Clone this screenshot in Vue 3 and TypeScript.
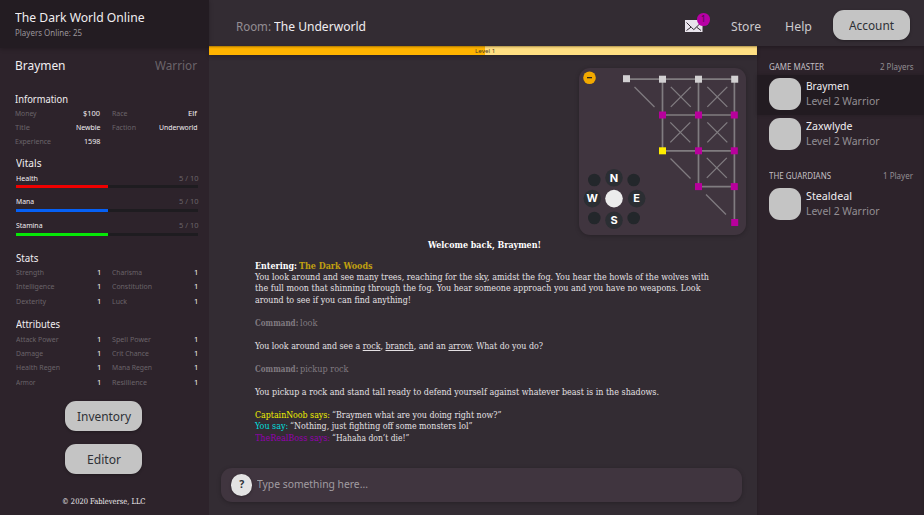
<script setup lang="ts">
import type { Directive } from 'vue'

interface Stat { label: string; lw: number; value: string; vw: number }
interface Vital { name: string; w: number; value: number; max: number; kind: string }
interface Player { name: string; w: number; active?: boolean }
interface Group { title: string; tw: number; count: string; cw: number; players: Player[] }

// Sets a run of text to a fixed measure, condensing or widening its glyphs.
const vFit: Directive<HTMLElement, number> = {
  mounted(el, binding) {
    const natural = el.offsetWidth ? el.getBoundingClientRect().width : 0
    if (!natural) return
    el.style.width = `${binding.value}px`
    el.style.transform = `scaleX(${binding.value / natural})`
  },
}

const one = (label: string, lw: number): Stat => ({ label, lw, value: '1', vw: 4.4 })

const information: Stat[] = [
  { label: 'Money', lw: 21.5, value: '$100', vw: 17 },
  { label: 'Race', lw: 15.5, value: 'Elf', vw: 9 },
  { label: 'Title', lw: 15, value: 'Newbie', vw: 24.5 },
  { label: 'Faction', lw: 24, value: 'Underworld', vw: 38.5 },
  { label: 'Experience', lw: 36, value: '1598', vw: 16.5 },
]
const vitals: Vital[] = [
  { name: 'Health', w: 22, value: 5, max: 10, kind: 'health' },
  { name: 'Mana', w: 18, value: 5, max: 10, kind: 'mana' },
  { name: 'Stamina', w: 26.5, value: 5, max: 10, kind: 'stamina' },
]
const stats = [
  one('Strength', 28), one('Charisma', 30), one('Intelligence', 38.5),
  one('Constitution', 40), one('Dexterity', 30), one('Luck', 15),
]
const attributes = [
  one('Attack Power', 42.5), one('Spell Power', 39), one('Damage', 27), one('Crit Chance', 37),
  one('Health Regen', 44), one('Mana Regen', 40), one('Armor', 19.5), one('Resillience', 35),
]
const groups: Group[] = [
  { title: 'GAME MASTER', tw: 55, count: '2 Players', cw: 33.5,
    players: [{ name: 'Braymen', w: 43, active: true }, { name: 'Zaxwlyde', w: 46.5 }] },
  { title: 'THE GUARDIANS', tw: 62, count: '1 Player', cw: 30,
    players: [{ name: 'Stealdeal', w: 46 }] },
]

const crosses = [[101.5, 27.5], [138, 27.5], [101, 63], [138, 63], [137.5, 98.5]]
const slashes = [[65, 27], [101, 98.5], [136.5, 134.5]]
const rooms: [number, number, string][] = [
  [47.5, 10.7, 'visited'], [83.5, 11.2, 'visited'], [119.5, 11.2, 'visited'], [155.7, 11.2, 'visited'],
  [83.5, 47, 'unseen'], [119.5, 47, 'unseen'], [155.3, 47, 'unseen'],
  [83.5, 82.8, 'here'], [119.5, 82.8, 'unseen'], [155.3, 82.8, 'unseen'],
  [119.5, 118.6, 'unseen'], [155.3, 118.6, 'unseen'], [155.7, 154.5, 'unseen'],
]
const directions: [number, number, string][] = [
  [35, 109.8, 'N'], [13.3, 130.6, 'W'], [57.7, 130.6, 'E'], [35, 152.2, 'S'],
]
const diagonals = [[15.3, 112], [54.7, 112], [15.3, 150], [54.7, 150]]
</script>

<template>
  <div class="game">
    <aside class="sidebar">
      <header class="brand">
        <div class="brand-title"><span v-fit="129.5" class="t">The Dark World Online</span></div>
        <div class="brand-sub"><span v-fit="67" class="t">Players Online: 25</span></div>
      </header>

      <div class="character">
        <span v-fit="50.5" class="t">Braymen</span>
        <span v-fit="42" class="t muted">Warrior</span>
      </div>

      <section class="info">
        <h2><span v-fit="53" class="t">Information</span></h2>
        <div class="grid">
          <div v-for="s in information" :key="s.label" class="pair">
            <span v-fit="s.lw" class="t muted">{{ s.label }}</span>
            <span v-fit="s.vw" class="t">{{ s.value }}</span>
          </div>
        </div>
      </section>

      <section class="vitals">
        <h2><span v-fit="25.5" class="t">Vitals</span></h2>
        <div v-for="v in vitals" :key="v.name" class="vital">
          <div class="vital-row">
            <span v-fit="v.w" class="t">{{ v.name }}</span>
            <span v-fit="19.5" class="t muted">{{ v.value }} / {{ v.max }}</span>
          </div>
          <div class="track"><div class="fill" :class="v.kind" :style="{ width: (v.value / v.max) * 101 + '%' }"></div></div>
        </div>
      </section>

      <section class="stats">
        <h2><span v-fit="22.5" class="t">Stats</span></h2>
        <div class="grid">
          <div v-for="s in stats" :key="s.label" class="pair">
            <span v-fit="s.lw" class="t muted">{{ s.label }}</span>
            <span v-fit="s.vw" class="t">{{ s.value }}</span>
          </div>
        </div>
      </section>

      <section class="attributes">
        <h2><span v-fit="44" class="t">Attributes</span></h2>
        <div class="grid">
          <div v-for="s in attributes" :key="s.label" class="pair">
            <span v-fit="s.lw" class="t muted">{{ s.label }}</span>
            <span v-fit="s.vw" class="t">{{ s.value }}</span>
          </div>
        </div>
      </section>

      <div class="actions">
        <button class="btn"><span v-fit="54" class="t">Inventory</span></button>
        <button class="btn"><span v-fit="34" class="t">Editor</span></button>
      </div>
      <footer class="legal"><span v-fit="83.5" class="t">© 2020 Fableverse, LLC</span></footer>
    </aside>

    <div class="right">
      <header class="topbar">
        <div class="room">
          <span v-fit="35" class="t room-label">Room:</span>
          <span v-fit="92" class="t">The Underworld</span>
        </div>
        <nav class="nav">
          <div class="mail">
            <svg width="18" height="12" viewBox="0 0 18 12">
              <rect width="17.5" height="12" fill="#e9e4ec" />
              <path d="M1.5 2.5 L6.6 7.6 L8.8 9.6 L11 7.6 L16 2.5 M1.5 10.5 L6.2 7 M16 10.5 L11.4 7" fill="none" stroke="#332c33" stroke-width="1" />
            </svg>
            <span class="badge">1</span>
          </div>
          <a class="store"><span v-fit="30" class="t">Store</span></a>
          <a class="help"><span v-fit="27" class="t">Help</span></a>
          <button class="btn"><span v-fit="45" class="t">Account</span></button>
        </nav>
      </header>

      <div class="body">
        <main class="main">
          <div class="level"><div class="level-fill"></div><span class="level-text"><span v-fit="20.5" class="t">Level 1</span></span></div>

          <div class="map">
            <svg width="167" height="167" viewBox="0 0 167 167">
              <g class="line">
                <path d="M47.5 11.2H155.7M83.5 47H155.3M83.5 82.8H155.3M119.5 118.6H155.3M83.5 11V83M119.5 11V118.6M155.4 11V154.5" />
              </g>
              <g class="thin">
                <path v-for="(c, i) in crosses" :key="i" :d="`M${c[0] - 10} ${c[1] - 8}m0 0l20 20m0-20l-20 20`" transform="translate(0.3 -0.6)" />
                <path v-for="(s, i) in slashes" :key="'s' + i" :d="`M${s[0] - 9.5} ${s[1] - 8}l20 20`" />
              </g>
              <rect v-for="(r, i) in rooms" :key="'r' + i" :x="r[0] - 3.5" :y="r[1] - 3.5" width="7" height="7" :class="r[2]" />
              <circle cx="10.5" cy="9.7" r="6.3" fill="#f2a900" />
              <rect x="8" y="9" width="5" height="1.3" fill="#2b2420" />
              <circle v-for="(d, i) in diagonals" :key="'d' + i" :cx="d[0]" :cy="d[1]" r="6.3" fill="#23272b" />
              <g v-for="d in directions" :key="d[2]">
                <circle :cx="d[0]" :cy="d[1]" r="8.8" fill="#2b2e33" />
                <text :x="d[0]" :y="d[1] + 3.7" text-anchor="middle" class="dir">{{ d[2] }}</text>
              </g>
              <circle cx="35" cy="130.6" r="8.8" fill="#ececec" />
            </svg>
          </div>

          <div class="log">
            <p class="welcome"><span v-fit="113" class="t">Welcome back, Braymen!</span></p>
            <p class="bright"><span v-fit="42" class="t strong">Entering:</span><span v-fit="73.5" class="t strong gold">The Dark Woods</span></p>
            <p><span v-fit="454" class="t">You look around and see many trees, reaching for the sky, amidst the fog. You hear the howls of the wolves with</span></p>
            <p><span v-fit="445.5" class="t">the full moon that shinning through the fog. You hear someone approach you and you have no weapons. Look</span></p>
            <p class="gap"><span v-fit="156" class="t">around to see if you can find anything!</span></p>
            <p class="cmd gap"><span v-fit="43.3" class="t strong">Command:</span><span v-fit="17.5" class="t">look</span></p>
            <p class="gap"><span v-fit="288" class="t">You look around and see a <u>rock</u>, <u>branch</u>, and an <u>arrow</u>. What do you do?</span></p>
            <p class="cmd gap"><span v-fit="43.3" class="t strong">Command:</span><span v-fit="48.5" class="t">pickup rock</span></p>
            <p class="gap"><span v-fit="404" class="t">You pickup a rock and stand tall ready to defend yourself against whatever beast is in the shadows.</span></p>
            <p><span v-fit="75" class="t yellow">CaptainNoob says:</span><span v-fit="169.5" class="t">“Braymen what are you doing right now?”</span></p>
            <p><span v-fit="33.3" class="t cyan">You say:</span><span v-fit="182.5" class="t">“Nothing, just fighting off some monsters lol”</span></p>
            <p><span v-fit="75" class="t purple">TheRealBoss says:</span><span v-fit="77.5" class="t">“Hahaha don’t die!”</span></p>
          </div>

          <div class="prompt">
            <span class="q">?</span>
            <span v-fit="111" class="t">Type something here...</span>
          </div>
        </main>

        <aside class="players">
          <section v-for="g in groups" :key="g.title" class="group">
            <div class="group-head">
              <span v-fit="g.tw" class="t">{{ g.title }}</span>
              <span v-fit="g.cw" class="t count">{{ g.count }}</span>
            </div>
            <div v-for="p in g.players" :key="p.name" class="player" :class="{ active: p.active }">
              <div class="avatar"></div>
              <div class="who">
                <div><span v-fit="p.w" class="t">{{ p.name }}</span></div>
                <div class="rank"><span v-fit="73.5" class="t">Level 2 Warrior</span></div>
              </div>
            </div>
          </section>
        </aside>
      </div>
    </div>
  </div>
</template>

<style>
body { background: #332c33; overflow: hidden; }
</style>

<style scoped>
.game {
  display: flex; width: 924px; height: 515px; overflow: hidden;
  background: #332c33; color: #f1eef1;
  font-family: "Noto Sans", "Open Sans", sans-serif;
}
.game * { box-sizing: border-box; }
.t { display: inline-block; flex: none; white-space: nowrap; transform-origin: 0 50%; }
.muted { color: #6b636a; }
h2, p { margin: 0; font-weight: 400; }

.sidebar { display: flex; flex-direction: column; width: 209px; flex: none; background: #2d232b; }
.brand { height: 48px; flex: none; padding: 6.6px 15px 0; background: #231c22; box-shadow: 0 1px 4px rgba(0, 0, 0, .25); }
.brand-title { height: 19.4px; line-height: 20px; font-size: 12.8px; }
.brand-sub { height: 14px; line-height: 14px; font-size: 8.8px; color: #9a959a; }
.character {
  display: flex; justify-content: space-between; height: 20px; margin: 7px 12px 0.5px 15px;
  line-height: 20px; font-size: 13px;
}
h2 { height: 13.5px; padding-top: 1px; line-height: 13.5px; font-size: 10px; }
.info { height: 64px; margin: 16.5px 12px 0 15px; }
.vitals { height: 95px; margin: 0 11px 0 16px; }
.stats { height: 66px; margin: 0 11px 0 16px; }
.attributes { height: 84px; margin: 0 11px 0 16px; }
.grid { display: grid; grid-template-columns: 1fr 1fr; column-gap: 11.5px; grid-auto-rows: 14px; line-height: 14px; font-size: 7.8px; }
.stats .grid { grid-auto-rows: 14.6px; line-height: 14.4px; }
.attributes .grid { grid-auto-rows: 14.4px; padding-top: 1px; }
.stats .grid, .attributes .grid { column-gap: 10.5px; }
.pair { display: flex; justify-content: space-between; }
.vitals h2 { margin-bottom: 1.2px; }
.vital { height: 23.7px; }
.vital-row { display: flex; justify-content: space-between; height: 14.5px; line-height: 14px; font-size: 7.8px; }
.track { height: 3px; background: #1e1c20; }
.fill { height: 3px; }
.health { background: #ee0000; }
.mana { background: #0560f5; }
.stamina { background: #06e806; }
.actions { display: flex; flex-direction: column; align-items: center; gap: 13px; padding: 0.4px 2px 0 0; }
.btn {
  display: flex; align-items: center; justify-content: center; width: 77px; height: 30px; padding: 0;
  border: 0; border-radius: 11px; background: #c4c4c4; color: #2e3136;
  font-family: inherit; font-size: 13px; line-height: 20px; box-shadow: 0 1px 3px rgba(0, 0, 0, .3);
}
.legal { display: flex; justify-content: center; margin-top: 21.6px; padding-right: 1px; font: 7.8px/12px "DejaVu Serif Condensed", "DejaVu Serif", serif; }

.right { display: flex; flex-direction: column; flex: 1; }
.topbar { display: flex; justify-content: space-between; height: 46px; padding: 10px 14.5px 0 26.5px; }
.room { display: flex; gap: 3.5px; height: 31px; line-height: 32px; font-size: 13px; }
.room-label { color: #938e93; }
.nav { display: flex; align-items: flex-start; height: 31px; line-height: 32px; font-size: 13px; color: #cdcacd; }
.mail { position: relative; width: 18px; height: 31px; padding-top: 10px; margin-right: 27.5px; line-height: 0; }
.badge {
  position: absolute; left: 12px; top: 3px; width: 12.6px; height: 12.6px; border-radius: 50%;
  background: #b800a5; color: #3a1038; text-align: center; font-size: 8px; line-height: 12.6px;
}
.store { margin-right: 24px; }
.help { margin-right: 21px; }

.body { display: flex; flex: 1; }
.main { display: flex; flex-direction: column; width: 548px; }
.level { display: flex; position: relative; height: 9px; background: #ffdf82; box-shadow: 0 2px 4px rgba(0, 0, 0, .2), inset 0 2px 2px -1px rgba(60, 40, 0, .45); }
.level-fill { width: 276px; height: 9px; background: #ffb400; box-shadow: inset 0 2px 2px -1px rgba(60, 40, 0, .45); }
.level-text { position: absolute; left: 265.5px; top: 0.5px; font-size: 6px; line-height: 9px; color: #4a3c2a; display: flex; }
.map {
  align-self: flex-end; width: 167px; height: 167px; margin: 13px 11px 0 0; border-radius: 11px;
  background: #40353f; box-shadow: 0 1px 4px rgba(0, 0, 0, .25); line-height: 0;
}
.line { fill: none; stroke: #807c80; stroke-width: 1.7; }
.thin { fill: none; stroke: #807c80; stroke-width: 1.3; }
.visited { fill: #d2d0d2; }
.unseen { fill: #b8009c; }
.here { fill: #ffee00; }
.dir { font: 700 11px "Inter", "Open Sans", sans-serif; fill: #fff; }

.log {
  height: 229px; padding: 5px 0 0 46px;
  font: 8.7px/11.5px "DejaVu Serif Condensed", "DejaVu Serif", serif; color: #e4e0e3;
}
.log p { display: flex; gap: 2.2px; height: 11.5px; }
.log .gap { margin-bottom: 11.5px; }
.log .welcome { justify-content: center; margin-bottom: 8.5px; padding-right: 43px; font-size: 9px; font-weight: 700; color: #fff; }
.log .bright { font-size: 9.2px; color: #fff; }
.strong { font-weight: 700; }
.gold { color: #c0a010; }
.log .cmd { color: #807a80; }
.yellow { color: #f0f000; }
.cyan { color: #00dede; }
.purple { color: #9500b0; }

.prompt {
  display: flex; align-items: center; width: 521px; height: 34px; margin: 4px 0 0 12px; padding: 0 0 0 10px;
  border-radius: 11px; background: #40353f; box-shadow: 0 1px 4px rgba(0, 0, 0, .25); font-size: 11px; line-height: 14px; color: #a19ca1;
}
.prompt .t { padding-bottom: 2px; }
.q {
  width: 21.4px; height: 21.4px; margin-right: 4.6px; border-radius: 50%; background: #e3e3e3; color: #2e3136;
  text-align: center; font-size: 10.5px; font-weight: 700; line-height: 21px; box-shadow: 0 1px 3px rgba(0, 0, 0, .3);
}

.players { flex: 1; background: #2d232b; box-shadow: inset 0 2px 3px rgba(0, 0, 0, .2); }
.group { padding-top: 12.5px; height: 109.3px; }
.group-head { display: flex; justify-content: space-between; height: 16.5px; padding: 0 11px 0 12px; line-height: 15px; font-size: 8.2px; color: #c3bfc3; }
.count { color: #938e93; }
.player { display: flex; height: 39px; padding: 2.5px 0 0 11.8px; }
.active { height: 40px; padding-top: 3px; background: #221b21; box-shadow: 0 0 4px rgba(0, 0, 0, .2); }
.group + .group .player { padding-top: 3.3px; }
.avatar { width: 32px; height: 32px; border-radius: 11px; background: #c4c4c4; }
.who { margin-left: 5px; padding-top: 0.3px; font-size: 10.8px; line-height: 15px; }
.who > div { height: 15px; }
.rank { color: #938e93; }
</style>
